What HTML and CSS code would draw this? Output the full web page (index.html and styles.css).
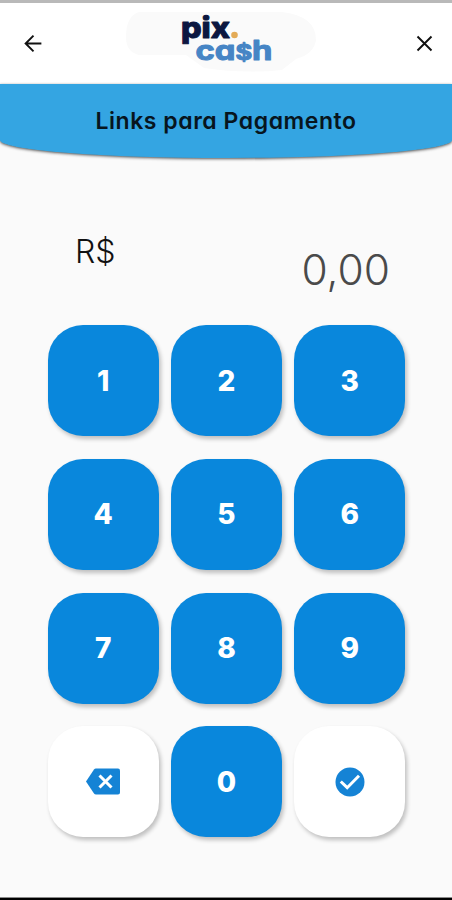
FILE: index.html
```html
<!DOCTYPE html>
<html lang="pt-BR">
<head>
<meta charset="utf-8">
<meta name="viewport" content="width=device-width">
<title>Links para Pagamento</title>
<link rel="stylesheet" href="styles.css">
</head>
<body>
<main class="app">
  <header class="topbar">
    <svg class="nav-icon" viewBox="0 0 24 24" aria-label="Voltar"><path d="M21 12H3M12 3L3 12L12 21"/></svg>
    <svg class="logo" viewBox="0 0 192 62" aria-label="pix ca$h">
      <path class="logo-shade" d="M15 0H158Q192 4 192 28Q190 42 172 47L158 58Q120 62 80 56L62 43H15Q2 40 2 25Q2 4 15 0Z"/>
      <text class="logo-pix" x="57" y="25.500" textLength="49" lengthAdjust="spacingAndGlyphs">pix</text>
      <text class="logo-cash" x="71.500" y="47.500" textLength="77" lengthAdjust="spacingAndGlyphs">ca<tspan class="logo-dollar">$</tspan>h</text>
      <circle class="logo-dot" cx="110.500" cy="23" r="3.300"/>
    </svg>
    <svg class="nav-icon" viewBox="0 0 24 24" aria-label="Fechar"><path d="M4 4L20 20M20 4L4 20"/></svg>
  </header>
  <section class="banner"><h1 class="title">Links para Pagamento</h1></section>
  <section class="amount">
    <span class="currency">R$</span>
    <span class="value">0,00</span>
  </section>
  <section class="keypad">
    <button class="key">1</button><button class="key">2</button><button class="key">3</button>
    <button class="key">4</button><button class="key">5</button><button class="key">6</button>
    <button class="key">7</button><button class="key">8</button><button class="key">9</button>
    <button class="key key-light" aria-label="Apagar"><svg class="erase" viewBox="0 0 34 27"><path class="fill" d="M10 .5H32Q34 .5 34 2.500V24.500Q34 26.500 32 26.500H10Q8.700 26.500 8 25.500L0 13.500L8 1.500Q8.700 .5 10 .5Z"/><path class="mark" d="M13.500 7.500L25.500 19.500M25.500 7.500L13.500 19.500"/></svg></button>
    <button class="key">0</button>
    <button class="key key-light" aria-label="Confirmar"><svg class="confirm" viewBox="0 0 30 30"><circle class="fill" cx="15" cy="15" r="14.500"/><path class="mark" d="M5.800 14.500L12.200 20.700L24 8.800"/></svg></button>
  </section>
</main>
</body>
</html>
```
FILE: styles.css
```css
* { box-sizing: border-box; }
body { margin: 0; font-family: Inter, "Liberation Sans", sans-serif; }
.app {
  height: 900px;
  display: flex;
  flex-direction: column;
  background: #fafafa;
  border-top: 3px solid #b9b9b9;
  border-bottom: 2px solid #000;
  box-shadow: inset 0 -1px #8a8a8a;
  overflow: hidden;
}
.topbar {
  height: 81px;
  flex: none;
  padding: 9px 17px 0 23px;
  display: flex;
  justify-content: space-between;
  align-items: flex-start;
  background: #fff;
}
.nav-icon { width: 21px; height: 21px; margin-top: 21px; fill: none; stroke: #111; stroke-width: 2.2; }
.logo { width: 192px; height: 62px; margin-right: 19px; overflow: visible; }
.logo-shade { fill: #fafafa; }
.logo-pix { font: 800 29px Inter, sans-serif; fill: #0c1740; stroke: #0c1740; stroke-width: 1; stroke-linejoin: round; }
.logo-cash { font: 700 27px Inter, sans-serif; font-feature-settings: "cv11"; fill: #4685c5; stroke: #4685c5; stroke-width: 1; stroke-linejoin: round; }
.logo-dollar { font-size: 21px; }
.logo-dot { fill: #e3ab57; }
.banner {
  height: 74px;
  flex: none;
  display: flex;
  justify-content: center;
  align-items: center;
  background: #34a5e2;
  border-radius: 0 0 50% 50% / 0 0 18px 18px;
  box-shadow: 0 1px 3px #555;
}
.title { margin: 0; font-size: 23px; font-weight: 600; letter-spacing: .55px; font-feature-settings: "cv11"; color: #07151e; }
.amount {
  height: 167px;
  flex: none;
  padding: 72px 62px 0 75px;
  display: flex;
  justify-content: space-between;
  align-items: flex-start;
}
.currency { font-size: 32px; line-height: 44px; font-weight: 300; color: #111; }
.value { font-size: 42.5px; line-height: 60px; margin-top: 10px; font-weight: 300; color: #4a4a4a; }
.keypad {
  display: grid;
  grid-template-columns: repeat(3, 111px);
  grid-auto-rows: 111px;
  gap: 22.8px 12.3px;
  padding-left: 47.7px;
}
.key {
  display: flex;
  align-items: center;
  justify-content: center;
  padding: 0;
  border: 0;
  border-radius: 35px;
  background: #0987dc;
  color: #fff;
  font: 800 28px Inter, sans-serif;
  box-shadow: 2px 3px 4px rgba(0, 0, 0, .24);
}
.key-light { background: #fff; }
.erase { width: 34px; height: 27px; }
.confirm { width: 30px; height: 30px; }
.fill { fill: #1583d5; }
.mark { fill: none; stroke: #fff; stroke-width: 3; }
```
